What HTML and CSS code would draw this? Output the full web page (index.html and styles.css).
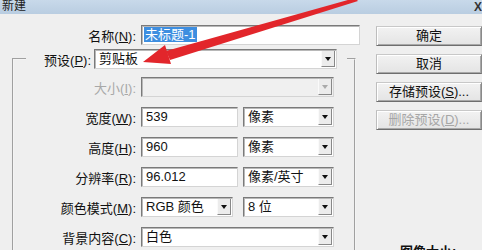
FILE: index.html
```html
<!DOCTYPE html>
<html lang="zh-CN">
<head>
    <meta charset="UTF-8">
    <title>新建</title>
    <link rel="stylesheet" href="styles.css">
</head>
<body>

<div class="dialog">
    <!-- Title Bar -->
    <div class="titlebar">
        <span class="title">新建</span>
        <span class="close">X</span>
    </div>

    <div class="main">
        <!-- Form -->
        <div class="form">
            <div class="row name-row">
                <label class="label">名称(<u>N</u>):</label>
                <div class="field name-field"><span class="selected">未标题-1</span></div>
            </div>

            <fieldset class="group">
                <legend class="preset">
                    <label class="label preset-label">预设(<u>P</u>):</label>
                    <div class="field select preset-select">剪贴板<span class="arrow"></span></div>
                </legend>

                <div class="row">
                    <label class="label disabled">大小(<u>I</u>):</label>
                    <div class="field select wide disabled-field"><span class="arrow"></span></div>
                </div>
                <div class="row">
                    <label class="label">宽度(<u>W</u>):</label>
                    <div class="field number">539</div>
                    <div class="field select unit">像素<span class="arrow"></span></div>
                </div>
                <div class="row">
                    <label class="label">高度(<u>H</u>):</label>
                    <div class="field number">960</div>
                    <div class="field select unit">像素<span class="arrow"></span></div>
                </div>
                <div class="row">
                    <label class="label">分辨率(<u>R</u>):</label>
                    <div class="field number">96.012</div>
                    <div class="field select unit">像素/英寸<span class="arrow"></span></div>
                </div>
                <div class="row">
                    <label class="label">颜色模式(<u>M</u>):</label>
                    <div class="field select mode">RGB 颜色<span class="arrow"></span></div>
                    <div class="field select unit">8 位<span class="arrow"></span></div>
                </div>
                <div class="row">
                    <label class="label">背景内容(<u>C</u>):</label>
                    <div class="field select wide">白色<span class="arrow"></span></div>
                </div>
            </fieldset>
        </div>

        <!-- Buttons -->
        <div class="buttons">
            <button class="btn">确定</button>
            <button class="btn">取消</button>
            <button class="btn">存储预设(<u>S</u>)...</button>
            <button class="btn" disabled>删除预设(<u>D</u>)...</button>
            <div class="image-size">图像大小:</div>
        </div>
    </div>

    <!-- Red annotation arrow -->
    <svg class="annotation" width="482" height="250" viewBox="0 0 482 250">
        <polygon points="355,-2 358,1 170,60 166,51" fill="#e2262b"/>
        <polygon points="143,62 171,64 165,45" fill="#e2262b"/>
    </svg>
</div>

</body>
</html>
```

FILE: styles.css
```css
/* General Styling */
body {
    margin: 0;
    background: #eeeeee;
    font-family: "Liberation Sans", "Noto Sans CJK SC", sans-serif;
    font-size: 13px;
    color: #111;
}

.dialog {
    position: relative;
    width: 482px;
    height: 250px;
    overflow: hidden;
    background: #efefef;
}

u {
    text-decoration: underline;
    text-underline-offset: 1px;
}

/* Title Bar */
.titlebar {
    height: 14px;
    background: linear-gradient(#c8d9ea, #b9cde1);
    display: flex;
    align-items: center;
    justify-content: space-between;
    font-size: 12px;
    line-height: 14px;
}
.title {
    margin-left: 2px;
    margin-top: -3px;
    color: #222;
}
.close {
    margin-right: 0;
    font-weight: bold;
    color: #333;
}

.main {
    display: flex;
}

/* Form */
.form {
    width: 360px;
    padding-top: 11px;
}
.row {
    display: flex;
    align-items: center;
    height: 20px;
}
.label {
    width: 122px;
    padding-right: 5px;
    text-align: right;
    white-space: nowrap;
}
.name-row .label {
    width: 136px;
}
.label.disabled {
    color: #a8a8a8;
}

/* Inputs */
.field {
    position: relative;
    box-sizing: border-box;
    height: 20px;
    background: #fff;
    border: 1px solid;
    border-color: #7a7a7a #d4d4d4 #d4d4d4 #7a7a7a;
    box-shadow: inset 1px 1px 0 #b8b8b8;
    padding-left: 4px;
    line-height: 18px;
    white-space: nowrap;
}
.name-field {
    width: 219px;
    padding-left: 2px;
}
.selected {
    background: #3d8ee0;
    color: #fff;
    padding: 0 1px;
}
.number {
    width: 97px;
}
.select {
    padding-right: 18px;
}
.unit {
    width: 91px;
    margin-left: 5px;
}
.mode {
    width: 92px;
    margin-right: 5px;
}
.wide {
    width: 193px;
}
.disabled-field {
    background: #f0f0f0;
}
.arrow {
    position: absolute;
    right: 1px;
    top: 1px;
    width: 14px;
    height: 16px;
    background: #ececec;
    border-left: 1px solid #fafafa;
    border-bottom: 1px solid #888;
    border-right: 1px solid #888;
    box-sizing: border-box;
}
.arrow::after {
    content: "";
    position: absolute;
    left: 3px;
    top: 6px;
    border-left: 3px solid transparent;
    border-right: 3px solid transparent;
    border-top: 4px solid #111;
}
.disabled-field .arrow::after {
    border-top-color: #aaa;
}

/* Group box */
.group {
    margin: 4px 0 0 12px;
    width: 344px;
    box-sizing: border-box;
    padding: 0 0 20px 0;
    border: 2px groove #f4f4f4;
    display: flex;
    flex-direction: column;
    gap: 10px;
}
.preset {
    display: flex;
    align-items: center;
    margin-left: 12px;
    padding: 0 10px 0 0;
}
.preset-label {
    width: 65px;
    padding-right: 3px;
}
.preset-select {
    width: 243px;
}
.group .row:first-of-type {
    margin-top: 8px;
}

/* Buttons */
.buttons {
    display: flex;
    flex-direction: column;
    gap: 8px;
    margin-left: 16px;
    padding-top: 12px;
}
.btn {
    width: 106px;
    height: 20px;
    padding: 0;
    font-family: inherit;
    font-size: 13px;
    line-height: 16px;
    color: #111;
    background: linear-gradient(#f2f2f2, #e4e4e4);
    border: 1px solid;
    border-color: #c8c8c8 #8a8a8a #6e6e6e #bdbdbd;
    box-shadow: inset 1px 1px 0 #fff, inset -1px -1px 0 #a8a8a8;
}
.btn:disabled {
    color: #a6a6a6;
}
.image-size {
    margin-top: 103px;
    margin-left: 24px;
    font-weight: bold;
}

/* Annotation */
.annotation {
    position: absolute;
    top: 0;
    left: 0;
    pointer-events: none;
}
```
